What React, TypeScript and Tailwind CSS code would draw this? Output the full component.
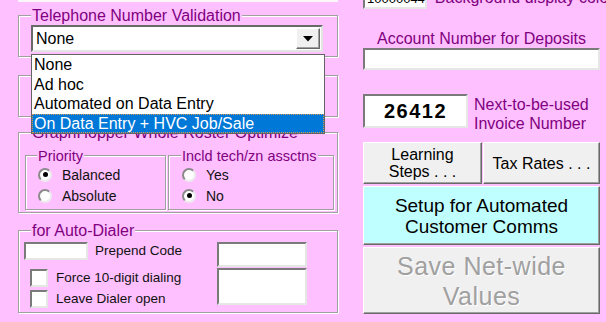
import React from 'react';

type BoxProps = {
  title?: string;
  titleClass?: string;
  className?: string;
  children?: React.ReactNode;
};

// etched windows-style group frame, title sits over the top edge
function GroupBox({ title, titleClass = '', className = '', children }: BoxProps) {
  return (
    <div
      className={`relative border border-[#a0a0a0] shadow-[inset_1px_1px_0_#ffffff,1px_1px_0_#ffffff] ${className}`}
    >
      {title && (
        <span
          className={`absolute whitespace-nowrap bg-[#ffc0ff] px-[1px] text-[#800080] ${titleClass}`}
        >
          {title}
        </span>
      )}
      {children}
    </div>
  );
}

function Sunken({ className = '', children }: { className?: string; children?: React.ReactNode }) {
  return (
    <div
      className={`border-2 border-t-[#7a7a7a] border-l-[#7a7a7a] border-r-[#e6e6e6] border-b-[#e6e6e6] bg-white ${className}`}
    >
      {children}
    </div>
  );
}

function Btn({ className = '', children }: { className?: string; children?: React.ReactNode }) {
  return (
    <div
      className={`flex flex-col items-center justify-center border border-t-white border-l-white border-r-[#696969] border-b-[#696969] text-center shadow-[inset_-1px_-1px_0_#a0a0a0] ${className}`}
    >
      {children}
    </div>
  );
}

function Radio({ on, label }: { on?: boolean; label: string }) {
  return (
    <div className="flex h-[21px] items-center">
      <span className="flex h-[14px] w-[14px] items-center justify-center rounded-full border-2 border-t-[#8a8a8a] border-l-[#8a8a8a] border-r-[#ececec] border-b-[#ececec] bg-white">
        {on && <span className="h-[5px] w-[5px] rounded-full bg-black" />}
      </span>
      <span className="ml-[10px] text-[14px] leading-[16px] text-[#111]">{label}</span>
    </div>
  );
}

function Check({ label }: { label: string }) {
  return (
    <div className="flex h-[21px] items-center">
      <Sunken className="h-[18px] w-[18px]" />
      <span className="ml-[8px] text-[13.5px] leading-[16px] text-[#111]">{label}</span>
    </div>
  );
}

const options = ['None', 'Ad hoc', 'Automated on Data Entry'];

export default function App() {
  return (
    <div className="relative flex h-[322px] w-[606px] overflow-hidden bg-[#ffc0ff] font-['Liberation_Sans',Arial,sans-serif] text-black">
      {/* Left column */}
      <div className="ml-[18px] flex w-[320px] flex-col">
        <div className="h-[2px] bg-[#faf6fa]" />

        <GroupBox
          title="Telephone Number Validation"
          titleClass="-top-[9px] left-[12px] text-[16px] leading-[18px]"
          className="z-10 mt-[13px] h-[42px]"
        >
          {/* Combo */}
          <div className="ml-[12px] mt-[9px] flex h-[27px] w-[292px] items-center justify-between border-2 border-t-[#696969] border-l-[#696969] border-r-[#e3e3e3] border-b-[#e3e3e3] bg-white pl-[3px] pr-[1px]">
            <span className="text-[16px] leading-[18px]">None</span>
            <span className="flex h-[21px] w-[24px] items-center justify-center border border-t-white border-l-white border-r-[#696969] border-b-[#696969] bg-[#f0f0f0] shadow-[inset_-1px_-1px_0_#a0a0a0]">
              <svg width="10" height="6" viewBox="0 0 10 6">
                <polygon points="0,0 10,0 5,5.5" fill="#000" />
              </svg>
            </span>
          </div>

          {/* Open list */}
          <div className="absolute left-[12px] top-[38px] h-[80px] w-[294px] border border-[#646464] bg-white">
            {options.map((o) => (
              <div key={o} className="h-[19.5px] pl-[2px] text-[16px] leading-[19.5px]">
                {o}
              </div>
            ))}
            <div className="h-[19px] border border-dotted border-[#d49a50] bg-[#0078d7] pl-[1px] text-[16px] leading-[17px] text-white">
              On Data Entry + HVC Job/Sale
            </div>
          </div>
        </GroupBox>

        <GroupBox className="mt-[18px] h-[42px]" />

        <GroupBox
          title="GraphHopper Whole Roster Optimize"
          titleClass="-top-[9px] left-[12px] text-[16px] leading-[18px]"
          className="mt-[15px] h-[81px]"
        >
          <div className="flex gap-[2px] pl-[6px] pt-[22px]">
            <GroupBox
              title="Priority"
              titleClass="-top-[8px] left-[11px] text-[14.5px] leading-[16px]"
              className="h-[55px] w-[141px]"
            >
              <div className="flex flex-col pl-[12px] pt-[8px]">
                <Radio on label="Balanced" />
                <Radio label="Absolute" />
              </div>
            </GroupBox>
            <GroupBox
              title="Incld tech/zn assctns"
              titleClass="-top-[8px] left-[12px] text-[14.5px] leading-[16px]"
              className="h-[55px] w-[166px]"
            >
              <div className="flex flex-col pl-[13px] pt-[8px]">
                <Radio label="Yes" />
                <Radio on label="No" />
              </div>
            </GroupBox>
          </div>
        </GroupBox>

        <GroupBox
          title="for Auto-Dialer"
          titleClass="-top-[9px] left-[12px] text-[16px] leading-[18px]"
          className="mt-[17px] h-[83px]"
        >
          <div className="flex pl-[5px] pt-[11px]">
            <div className="flex w-[193px] flex-col">
              <div className="flex h-[18px] items-center">
                <Sunken className="h-[18px] w-[64px]" />
                <span className="ml-[7px] text-[13.5px] leading-[16px] text-[#111]">Prepend Code</span>
              </div>
              <div className="mt-[7px] flex flex-col pl-[6px]">
                <Check label="Force 10-digit dialing" />
                <Check label="Leave Dialer open" />
              </div>
            </div>
            <div className="flex flex-col gap-[1px]">
              <Sunken className="h-[25px] w-[90px]" />
              <Sunken className="h-[37px] w-[90px]" />
            </div>
          </div>
        </GroupBox>
      </div>

      {/* Right column */}
      <div className="ml-[25px] flex w-[237px] flex-col">
        <div className="-mt-[13px] flex h-[22px] items-start">
          <Sunken className="h-[22px] w-[69px] pl-[2px] pt-[2px] text-[13px] leading-[15px]">10000044</Sunken>
          <span className="ml-[8px] mt-[2px] whitespace-nowrap text-[16px] leading-[18px] text-[#800080]">
            Background display color
          </span>
        </div>

        <div className="mt-[21px] text-center text-[16px] leading-[17px] text-[#800080]">
          Account Number for Deposits
        </div>
        <Sunken className="mt-[1px] h-[22px]" />

        <div className="mt-[24px] flex h-[34px] items-start">
          <Sunken className="flex h-[34px] w-[105px] items-center justify-center text-[20px] font-bold tracking-[1.5px]">
            26412
          </Sunken>
          <div className="ml-[6px] mt-[1px] text-[16px] leading-[19px] text-[#800080]">
            Next-to-be-used
            <br />
            Invoice Number
          </div>
        </div>

        <div className="mt-[14px] flex gap-[1px]">
          <Btn className="h-[42px] w-[119px] bg-[#f0f0f0] text-[16px] leading-[17px]">
            <span>Learning</span>
            <span>Steps . . .</span>
          </Btn>
          <Btn className="h-[42px] w-[117px] bg-[#f0f0f0] text-[16px] leading-[17px]">Tax Rates . . .</Btn>
        </div>
        <Btn className="mt-[2px] h-[59px] bg-[#c0ffff] text-[19px] leading-[21px]">
          <span>Setup for Automated</span>
          <span>Customer Comms</span>
        </Btn>
        <Btn className="mt-[2px] h-[67px] bg-[#f0f0f0] text-[25px] leading-[30px] tracking-[0.5px] text-[#a0a0a0] [text-shadow:1px_1px_0_#ffffff]">
          <span>Save Net-wide</span>
          <span>Values</span>
        </Btn>
      </div>
    </div>
  );
}
